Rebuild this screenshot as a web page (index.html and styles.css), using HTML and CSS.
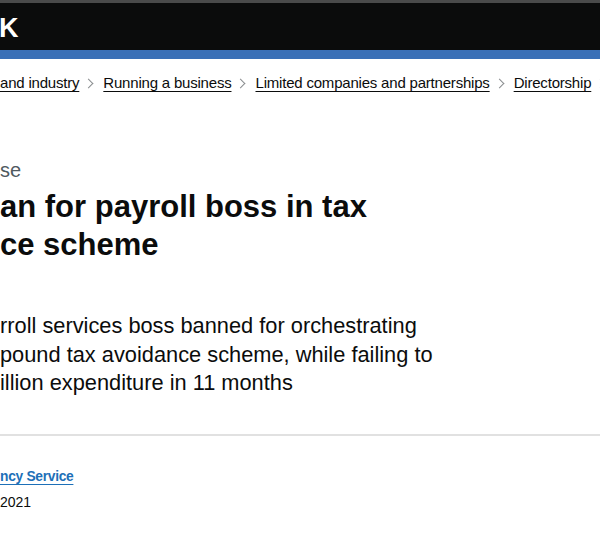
FILE: index.html
```html
<!DOCTYPE html>
<html lang="en">
<head>
<meta charset="utf-8">
<title>GOV.UK</title>
<link rel="stylesheet" href="styles.css">
</head>
<body>
<header class="site-header">
  <div class="logo">K</div>
</header>
<div class="header-bar"></div>
<main class="page">
  <nav class="breadcrumbs">
    <a href="#" class="crumb">and industry</a>
    <span class="chev"></span>
    <a href="#" class="crumb">Running a business</a>
    <span class="chev"></span>
    <a href="#" class="crumb">Limited companies and partnerships</a>
    <span class="chev"></span>
    <a href="#" class="crumb">Directorship</a>
    <span class="chev"></span>
  </nav>
  <p class="caption">se</p>
  <h1 class="title"><span class="line">an for payroll boss in tax</span><span class="line">ce scheme</span></h1>
  <p class="lede"><span class="line">rroll services boss banned for orchestrating</span><span class="line">pound tax avoidance scheme, while failing to</span><span class="line">illion expenditure in 11 months</span></p>
  <hr class="rule">
  <a href="#" class="org">ncy Service</a>
  <p class="date">2021</p>
</main>
</body>
</html>
```
FILE: styles.css
```css
html, body {
  margin: 0;
  padding: 0;
  background: #ffffff;
}
body {
  font-family: "Liberation Sans", Arial, sans-serif;
  color: #0b0c0c;
  overflow: hidden;
  width: 600px;
  height: 540px;
}
.site-header {
  height: 47px;
  background: #0b0c0c;
  border-top: 3px solid #4a4b4b;
  display: flex;
  align-items: center;
}
.logo {
  color: #ffffff;
  font-weight: 700;
  font-size: 27px;
  line-height: 28px;
  margin-left: -1px;
  margin-top: 2px;
}
.header-bar {
  height: 9px;
  background: #3a70b7;
}
.page {
  display: flex;
  flex-direction: column;
  align-items: flex-start;
  overflow: hidden;
}
.breadcrumbs {
  margin-top: 14px;
  height: 20px;
  display: flex;
  align-items: center;
  white-space: nowrap;
  font-size: 15px;
  letter-spacing: -0.2px;
  line-height: 20px;
}
.crumb {
  color: #0b0c0c;
  text-decoration: underline;
  text-underline-offset: 3px;
  text-decoration-thickness: 1px;
}
.chev {
  display: inline-block;
  flex: none;
  width: 6px;
  height: 6px;
  border-top: 1px solid #8a8d8f;
  border-right: 1px solid #8a8d8f;
  transform: rotate(45deg);
  margin: 0 11px 0 6px;
}
.caption {
  margin: 65px 0 0 0;
  font-size: 20px;
  line-height: 24px;
  color: #505a5f;
}
.title {
  margin: 6px 0 0 0;
  font-size: 31px;
  line-height: 38px;
  font-weight: 700;
}
.line {
  display: block;
  white-space: nowrap;
}
.lede {
  margin: 48px 0 0 0;
  font-size: 21.8px;
  line-height: 28.5px;
}
.rule {
  align-self: stretch;
  margin: 36.5px 0 0 0;
  border: 0;
  height: 2px;
  background: #e1e1e1;
}
.org {
  margin-top: 31px;
  font-size: 13.8px;
  letter-spacing: -0.3px;
  line-height: 20px;
  font-weight: 700;
  color: #1d70b8;
  text-decoration: underline;
  text-underline-offset: 3px;
}
.date {
  margin: 5px 0 0 0;
  font-size: 14px;
  line-height: 20px;
}
```
